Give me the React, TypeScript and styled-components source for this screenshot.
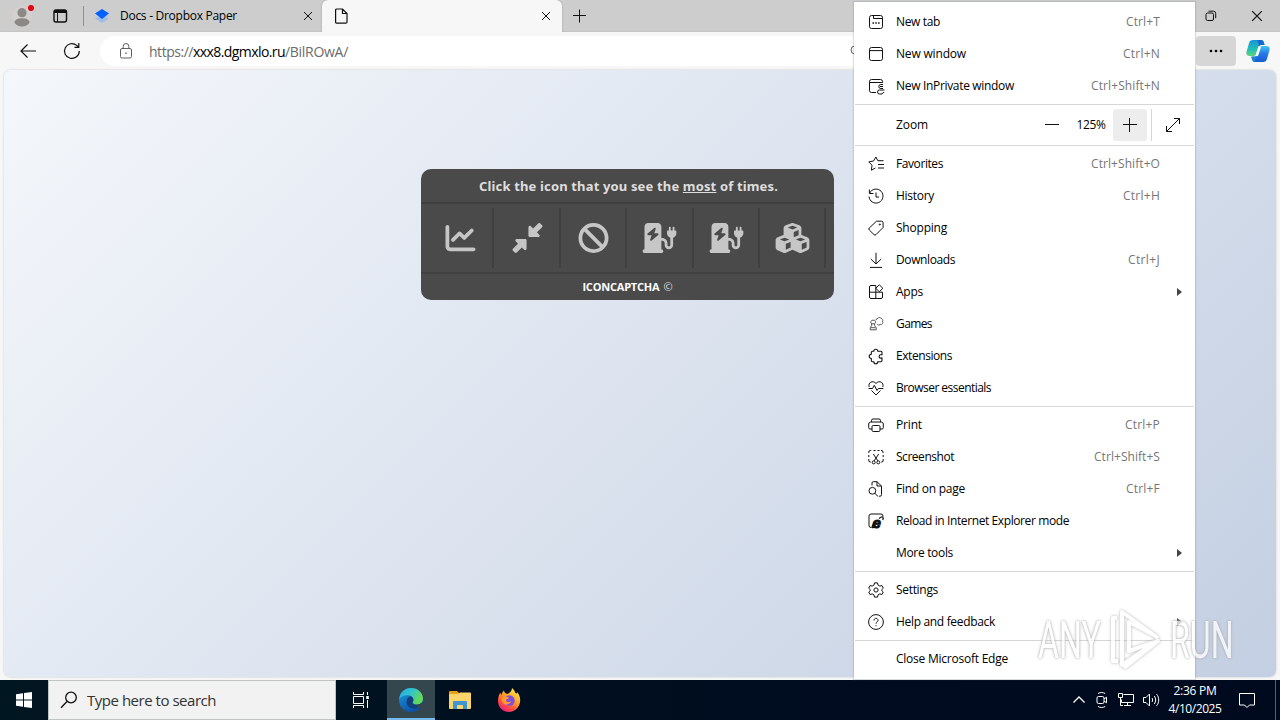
import React, {
  FC,
  ReactNode,
  useLayoutEffect,
  useRef,
  useState,
}             from 'react'
import styled, { createGlobalStyle } from 'styled-components'
import {
  FaBan,
  FaChargingStation,
  FaChartLine,
  FaCubes,
  FaDownLeftAndUpRightToCenter,
}             from 'react-icons/fa6'



type FitProps = {
  width: number
  children: ReactNode
}

// Tracks a single line of text so that it fills the given width
const Fit: FC<FitProps> = ( { width, children } ) => {
  const ref = useRef<HTMLSpanElement>( null )
  const [ spacing, setSpacing ] = useState( 0 )

  useLayoutEffect( () => {
    if ( !ref.current ) return
    const length = ref.current.textContent?.length || 1
    setSpacing( (width - ref.current.getBoundingClientRect().width) / length )
  }, [ width ] )

  return <FitText ref={ref} style={{ letterSpacing: `${spacing}px` }}>{children}</FitText>
}

type IconName =
  'tab' | 'window' | 'inprivate' | 'favorites' | 'history' | 'shopping' | 'downloads' | 'apps' | 'games' |
  'extensions' | 'essentials' | 'print' | 'screenshot' | 'find' | 'ie' | 'settings' | 'help'

const icons: Record<IconName, ReactNode> = {
  tab: <><rect x='1.5' y='1.5' width='13' height='13' rx='2'/><path d='M5.5 1.5v3h9'/><path d='M4.5 9h1.5M7.3 9h1.5M10.1 9h1.5' strokeWidth='1.6'/></>,
  window: <><rect x='1.5' y='1.5' width='13' height='13' rx='2'/><path d='M1.5 4.6h13'/></>,
  inprivate: <><path d='M8 14.5H3.5a2 2 0 0 1-2-2v-9a2 2 0 0 1 2-2h9a2 2 0 0 1 2 2v1.2M1.5 4.5h13'/><path d='M15 6.5h-2.2a2 2 0 0 0 0 4H15M12 8.5h3M16.5 12h-5a2 2 0 0 0 0 4H14l1.2-1.5h1'/></>,
  favorites: <><path d='M9.8 4.7 7.9 1 5.5 5 .8 5.9l3.2 3.3-.6 5 4-2.2M9.8 4.7h5.7M10 8.5h6M10 12h6'/></>,
  history: <><path d='M1.4 1.5v4h4M1.7 5A7 7 0 1 1 1 8.5M8 4.5V9h3'/></>,
  shopping: <><path d='M8.5 1.2h5a1.6 1.6 0 0 1 1.6 1.6v4.7L8 14.6a1.4 1.4 0 0 1-2 0L1.3 10a1.4 1.4 0 0 1 0-2z'/><circle cx='11.8' cy='4.5' r='.6'/></>,
  downloads: <><path d='M8 .8v11M2.8 7 8 12l5.2-5M2 15.4h12'/></>,
  apps: <><path d='M7.8 14.5V1.5H3a1.5 1.5 0 0 0-1.5 1.5v10A1.5 1.5 0 0 0 3 14.5h10a1.5 1.5 0 0 0 1.5-1.5V8.2h-13M11.3.8l3.6 3.5-3.6 3.5-3.5-3.5z'/></>,
  games: <g stroke='#555'><path d='M4.9 4.2a2 2 0 0 0-1.3 3.6v1.7L2.2 11.8v2h6v-2L6.6 9.5V7.8a2 2 0 0 0-1.7-3.6zM3 11.7h4.5M3.3 7.8h3.4'/><path d='M8 4.2a1.8 1.8 0 0 1 1.8-1.8 1.9 1.9 0 0 1 3.2 0 1.9 1.9 0 0 1 1.5 2.9 2 2 0 0 1-2.2 3.1 2 2 0 0 1-3 0'/></g>,
  extensions: <path d='M5.8 3.2a2 2 0 0 1 4 0h3a1.2 1.2 0 0 1 1.2 1.2v2.3h-1.2a1.7 1.7 0 0 0 0 3.4H14v2.4a1.2 1.2 0 0 1-1.2 1.2h-3a2 2 0 0 1-4 0H4.5a1.2 1.2 0 0 1-1.2-1.2v-2a2.1 2.1 0 0 1 0-4.2V4.4a1.2 1.2 0 0 1 1.2-1.2z' strokeWidth='1.1'/>,
  essentials: <><path d='M1.2 7C-.3 2.5 4.7-.2 8 3.4c3.3-3.6 8.3-.9 6.8 3.6M3.5 10.5 8 15l4.5-4.5M.5 8.5h4l1.8-3.2L9 10.5l1.4-2h5'/></>,
  print: <><path d='M3.5 5V3.5A1.5 1.5 0 0 1 5 2h6a1.5 1.5 0 0 1 1.5 1.5V5M4 12H2A1.3 1.3 0 0 1 .7 10.7V7A2 2 0 0 1 2.7 5h10.6a2 2 0 0 1 2 2v3.7A1.3 1.3 0 0 1 14 12h-2'/><rect x='4' y='8.5' width='8' height='6' rx='1.2'/></>,
  screenshot: <><path d='M.8 4V3a1.5 1.5 0 0 1 1.5-1.5h1M5.5 1.5h2M9.5 1.5h2M13 1.5a1.7 1.7 0 0 1 2 1.7V4M.8 6v2M.8 10v1.2A1.5 1.5 0 0 0 2.3 13h.5M15.2 6v2M15.2 10v1.2a1.5 1.5 0 0 1-1.5 1.8h-.5M5.3 5l4.6 7M10.7 5l-4.6 7'/><circle cx='5.7' cy='13.4' r='1.5'/><circle cx='10.3' cy='13.4' r='1.5'/></>,
  find: <><path d='M4 4.5V2a1.3 1.3 0 0 1 1.3-1.3H9L13.5 5v8.5a1.5 1.5 0 0 1-1.5 1.7h-1M9 .8V5h4.5M6.8 12.3l3.4 3.2'/><circle cx='4.4' cy='9.8' r='3.4'/></>,
  ie: <><path d='M3.5 14.5H3A2 2 0 0 1 1 12.5V3a2 2 0 0 1 2-2h10a2 2 0 0 1 2 2v.5'/><text x='4.5' y='14.5'>e</text><path d='M6 10.5c-3.5 4.5-1.5 5 1.5 3M11 5.5c4-3 5-1 3.7 1.5' strokeWidth='1.3'/></>,
  settings: <><path d='m6.5.9-.5 2.2-1.8 1-2.1-.6L.7 6.2l1.6 1.5v.9L.7 10l1.4 2.5 2.1-.6 1.8 1 .5 2.2h3l.5-2.2 1.8-1 2.1.6 1.4-2.5-1.6-1.5v-.8l1.6-1.5-1.4-2.7-2.1.6-1.8-1L9.5.9z' strokeLinejoin='round'/><circle cx='8' cy='8' r='2.1'/></>,
  help: <><circle cx='8' cy='8' r='7.4'/><path d='M6 6.5C6 3.5 10 3.8 10 6.3 10 8 8 7.8 8 9.7M8 11.2v1'/></>,
}

type MenuEntry = {
  label: string
  width: number
  icon?: IconName
  keys?: string
  keysWidth?: number
  submenu?: boolean
}

const windowItems: MenuEntry[] = [
  { label: 'New tab', width: 44, icon: 'tab', keys: 'Ctrl+T', keysWidth: 34 },
  { label: 'New window', width: 70, icon: 'window', keys: 'Ctrl+N', keysWidth: 37 },
  { label: 'New InPrivate window', width: 118, icon: 'inprivate', keys: 'Ctrl+Shift+N', keysWidth: 69 },
]

const pageItems: MenuEntry[] = [
  { label: 'Favorites', width: 47, icon: 'favorites', keys: 'Ctrl+Shift+O', keysWidth: 69 },
  { label: 'History', width: 38, icon: 'history', keys: 'Ctrl+H', keysWidth: 37 },
  { label: 'Shopping', width: 51, icon: 'shopping' },
  { label: 'Downloads', width: 59, icon: 'downloads', keys: 'Ctrl+J', keysWidth: 32 },
  { label: 'Apps', width: 27, icon: 'apps', submenu: true },
  { label: 'Games', width: 36, icon: 'games' },
  { label: 'Extensions', width: 56, icon: 'extensions' },
  { label: 'Browser essentials', width: 95, icon: 'essentials' },
]

const toolItems: MenuEntry[] = [
  { label: 'Print', width: 26, icon: 'print', keys: 'Ctrl+P', keysWidth: 35 },
  { label: 'Screenshot', width: 58, icon: 'screenshot', keys: 'Ctrl+Shift+S', keysWidth: 66 },
  { label: 'Find on page', width: 69, icon: 'find', keys: 'Ctrl+F', keysWidth: 34 },
  { label: 'Reload in Internet Explorer mode', width: 173, icon: 'ie' },
  { label: 'More tools', width: 57, submenu: true },
]

const helpItems: MenuEntry[] = [
  { label: 'Settings', width: 42, icon: 'settings' },
  { label: 'Help and feedback', width: 99, icon: 'help', submenu: true },
]

const MenuRows: FC<{ items: MenuEntry[] }> = ( { items } ) => (
  <>
    {items.map( ( item ) => (
      <MenuRow key={item.label}>
        <MenuIcon viewBox='0 0 16 16'>{item.icon && icons[item.icon]}</MenuIcon>
        <MenuLabel><Fit width={item.width}>{item.label}</Fit></MenuLabel>
        {item.keys && <Shortcut><Fit width={item.keysWidth || 0}>{item.keys}</Fit></Shortcut>}
        {item.submenu && <SubmenuArrow/>}
      </MenuRow>
    ) )}
  </>
)

const EdgeMenu = () => (
  <Menu>
    <MenuRows items={windowItems}/>
    <Separator/>
    <ZoomRow>
      <ZoomLabel><Fit width={32}>Zoom</Fit></ZoomLabel>
      <ZoomButton><Line width='16' height='16'><path d='M2 7.5h14'/></Line></ZoomButton>
      <ZoomValue><Fit width={29}>125%</Fit></ZoomValue>
      <ZoomButton $hover><Line width='16' height='16'><path d='M1 7.5h14M7.5 1v14'/></Line></ZoomButton>
      <FullScreen><Line width='16' height='16'><path d='M1.5 14.5l13-13M9 1.5h5.5V7M1.5 9v5.5H7'/></Line></FullScreen>
    </ZoomRow>
    <Separator/>
    <MenuRows items={pageItems}/>
    <Separator/>
    <MenuRows items={toolItems}/>
    <Separator/>
    <MenuRows items={helpItems}/>
    <Separator/>
    <MenuRows items={[ { label: 'Close Microsoft Edge', width: 112 } ]}/>
  </Menu>
)

const CloseIcon: FC<{ size: number }> = ( { size } ) => (
  <Line width={size} height={size} viewBox='0 0 10 10'><path d='M1 1l8 8M9 1L1 9'/></Line>
)

const TabStrip = () => (
  <Tabs>
    <Profile>
      <svg width='24' height='24' viewBox='0 0 24 24'>
        <circle cx='11' cy='12' r='10' fill='#d4d0ce'/>
        <circle cx='11' cy='8.7' r='4.6' fill='#8c8886'/>
        <path d='M3.4 18.5c0-5.8 15.2-5.8 15.2 0-3 5.2-12.2 5.2-15.2 0z' fill='#8c8886'/>
        <circle cx='20' cy='4' r='3' fill='#e3000f'/>
      </svg>
    </Profile>
    <Workspaces>
      <Line width='16' height='16'><rect x='2' y='2' width='12.5' height='12' rx='2' strokeWidth='1.4'/><path d='M2 3.5h12.5' strokeWidth='3'/><path d='M5.5 4v10'/></Line>
    </Workspaces>
    <BackgroundTab>
      <svg width='16' height='16' viewBox='0 0 16 16'>
        <path d='M1 10.5 8 7l7 3.5L8 15z' fill='#9fbdea'/>
        <path d='M1 5.5 8 1l7 4.5L8 11z' fill='#0061fe'/>
      </svg>
      <TabTitle><Fit width={117}>Docs - Dropbox Paper</Fit></TabTitle>
      <CloseIcon size={10}/>
    </BackgroundTab>
    <ActiveTab>
      <Line width='14' height='16'><path d='M3 1h5.5L13 5.5V14a1.2 1.2 0 0 1-1.2 1.2H3A1.2 1.2 0 0 1 1.6 14V2.2A1.2 1.2 0 0 1 3 1zM8.5 1v4.5H13' strokeWidth='1.2'/></Line>
      <CloseIcon size={10}/>
    </ActiveTab>
    <NewTab><Line width='16' height='16'><path d='M8.5 1.5v13M2 7.5h13'/></Line></NewTab>
    <WindowControls>
      <Line width='12' height='12'><rect x='1' y='3' width='7.5' height='7.5' rx='1.5'/><path d='M3.5 1.2h5a2.2 2.2 0 0 1 2.2 2.2v4.8'/></Line>
      <CloseIcon size={12}/>
    </WindowControls>
  </Tabs>
)

const AddressBar = () => (
  <Toolbar>
    <NavButton><Line width='18' height='16'><path d='M17 8H2M8.5 1.5 2 8l6.5 6.5' strokeWidth='1.2'/></Line></NavButton>
    <NavButton><Line width='18' height='18'><path d='M16.3 9a7.4 7.4 0 1 1-2.6-5.6l2 1.8M15.8 1v4.3h-4.3' strokeWidth='1.2'/></Line></NavButton>
    <Url>
      <Line $color='#616161' width='14' height='16'><rect x='1.5' y='5.5' width='11' height='9.5' rx='1.5'/><path d='M4.2 5.5V3.3a2.8 2.8 0 0 1 5.6 0v2.2'/><circle cx='7' cy='10.2' r='.5'/></Line>
      <UrlText>
        <Fit width={44}>https://</Fit>
        <b><Fit width={92}>xxx8.dgmxlo.ru</Fit></b>
        <Fit width={63}>/BilROwA/</Fit>
      </UrlText>
      <Line $color='#616161' width='12' height='12'><circle cx='5' cy='5' r='4'/><path d='m8 8 3 3'/></Line>
    </Url>
    <MoreButton><svg width='14' height='4'><circle cx='2' cy='2' r='1.3'/><circle cx='7' cy='2' r='1.3'/><circle cx='12' cy='2' r='1.3'/></svg></MoreButton>
    <Copilot/>
  </Toolbar>
)

const Copilot = () => (
  <CopilotIcon width='24' height='24' viewBox='0 0 24 24'>
    <defs>
      <linearGradient id='cpLeft' x1='0' y1='0' x2='0' y2='1'>
        <stop offset='0' stopColor='#1595d8'/><stop offset='.6' stopColor='#25bfb5'/><stop offset='1' stopColor='#5ed37c'/>
      </linearGradient>
      <linearGradient id='cpRight' x1='0' y1='0' x2='0' y2='1'>
        <stop offset='0' stopColor='#3fc4f3'/><stop offset='.5' stopColor='#2577e6'/><stop offset='1' stopColor='#1b5cd0'/>
      </linearGradient>
    </defs>
    <path d='M7 1h8c1.8 0 2.5 1 3 3l.6 2h-3c-2 0-2.7 1-3.3 3l-1.7 5.4c-.5 1.6-1.4 2.5-3 2.5H3.3C.8 16.9-.1 15 .6 12.4L3 4.2C3.6 2 4.8 1 7 1z' fill='url(#cpLeft)'/>
    <path d='M17 23H9c-1.8 0-2.5-1-3-3l-.6-2.2h3c2 0 2.7-1 3.3-3l1.7-5.2c.5-1.7 1.4-2.6 3-2.6h4.3c2.5 0 3.4 2 2.7 4.4L21 19.8c-.6 2.2-1.8 3.2-4 3.2z' fill='url(#cpRight)'/>
    <path d='M11.5 1H15c1.8 0 2.5 1 3 3l.6 2h-3c-1.3 0-2 .5-2.5 1.5z' fill='#1769cf'/>
    <path d='M13.5 8.5 11 15.8' stroke='#fff' strokeWidth='2.6' strokeLinecap='round'/>
    <path d='M6 20l-.7-2.5h3c1.4 0 2.2-.5 2.7-1.5l-2 5.5c-.4 1-.5 1.5 0 1.5-1.8 0-2.5-1-3-3z' fill='#1786d6'/>
  </CopilotIcon>
)

const captchaIcons = [ FaChartLine, FaDownLeftAndUpRightToCenter, FaBan, FaChargingStation, FaChargingStation, FaCubes ]

const Captcha = () => (
  <CaptchaBox>
    <CaptchaTitle><Fit width={299}>Click the icon that you see the <u>most</u> of times.</Fit></CaptchaTitle>
    <CaptchaIcons>
      {captchaIcons.map( ( Icon, i ) => <CaptchaCell key={i}><Icon/></CaptchaCell> )}
    </CaptchaIcons>
    <CaptchaFooter><b><Fit width={77}>ICONCAPTCHA</Fit></b> <span>©</span></CaptchaFooter>
  </CaptchaBox>
)

const Watermark = () => (
  <WatermarkBox>
    <WatermarkWord>ANY</WatermarkWord>
    <PlayMark width='62' height='66' viewBox='0 0 62 66'>
      <path d='M13 11H9v43h5'/>
      <path d='M18 44V5l36 26'/>
      <path d='M48 27 25 15v29l29-10L20 61'/>
      <path d='M18 44v14l34-23'/>
    </PlayMark>
    <WatermarkWord>RUN</WatermarkWord>
  </WatermarkBox>
)

const EdgeLogo = () => (
  <svg width='26' height='26' viewBox='0 0 26 26'>
    <defs>
      <linearGradient id='edgeTop' x1='0' y1='0' x2='1' y2='.4'>
        <stop offset='0' stopColor='#2aa9e0'/><stop offset='.5' stopColor='#2fc3cf'/><stop offset='1' stopColor='#65d957'/>
      </linearGradient>
      <linearGradient id='edgeBottom' x1='0' y1='0' x2='.6' y2='1'>
        <stop offset='0' stopColor='#1b9de2'/><stop offset='1' stopColor='#0c4fa4'/>
      </linearGradient>
    </defs>
    <circle cx='13' cy='13' r='12' fill='url(#edgeBottom)'/>
    <path d='M1.2 12C2 5 7 1 13 1c7 0 12 5 12 10.5 0 4-3 6.3-6.4 6.3-2.8 0-4.2-1-4.2-2 0-.6 1-1.2 1-3 0-2.5-2.5-4.6-6-4.6-3.8 0-7 2-8.2 3.8z' fill='url(#edgeTop)'/>
    <path d='M8.5 15c0-3 1.6-5 4-5.7 1.8.6 2.9 2 2.9 3.5 0 1.8-1 2.4-1 3 0 1 1.4 2 4.2 2 1.5 0 3-.4 4.2-1.3-.6 2.5-3.5 5-6.8 5-4.5 0-7.5-3-7.5-6.5z' fill='#123f7a'/>
    <path d='M14.4 15.8c0 1 1.4 2 4.2 2 2 0 4-.8 5.2-2.2L25 18l-2 4z' fill='#34474f'/>
  </svg>
)

const ExplorerLogo = () => (
  <svg width='24' height='22' viewBox='0 0 24 22'>
    <path d='M1 3a1 1 0 0 1 1-1h7l2 2h11v5H1z' fill='#e8a016'/>
    <path d='M1 5h9l2-1.5h10a1 1 0 0 1 1 1V19a1 1 0 0 1-1 1H2a1 1 0 0 1-1-1z' fill='#f9d56c'/>
    <path d='M5 20v-7a1 1 0 0 1 1-1h12a1 1 0 0 1 1 1v7h-4v-3a1 1 0 0 0-1-1h-4a1 1 0 0 0-1 1v3z' fill='#3f95cf'/>
  </svg>
)

const FirefoxLogo = () => (
  <svg width='24' height='26' viewBox='0 0 24 26'>
    <defs>
      <linearGradient id='fox' x1='.8' y1='0' x2='.2' y2='1'>
        <stop offset='0' stopColor='#fff04a'/><stop offset='.4' stopColor='#ffa52a'/><stop offset='.7' stopColor='#ff5140'/><stop offset='1' stopColor='#e31587'/>
      </linearGradient>
    </defs>
    <path d='M15 1c2 1.5 3 3.5 3.3 5C20 7 20.5 6 20.2 5c2 2.5 3 5.5 3 8.5C23 20 18 25 12 25S1 20.5 1 14c0-4 1-6.5 2.5-8.5 0 1 .3 2 .8 2.5C5 5.5 6 4.5 7 3.5 7 5.5 8.5 6.5 10.5 7 12.5 6 15 4 15 1z' fill='url(#fox)'/>
    <circle cx='12.5' cy='13.5' r='5.2' fill='#7b4fe0'/>
    <path d='M4.5 11c3-2.5 5-1 7.5-.5 0 1.5-3 1.5-3 2.7 0 2 3.5 2.3 5 .8-.5 3-4 4.5-7 3-1.5-1.5-2.5-3.5-2.5-6z' fill='#ff9a2e'/>
  </svg>
)

const Taskbar = () => (
  <Bar>
    <BarButton>
      <svg width='16' height='16' viewBox='0 0 16 16' fill='#fff'><path d='M0 2.3 7 1.3v6.2H0zM8 1.1 16 0v7.5H8zM0 8.5h7v6.2l-7-1zM8 8.5h8V16l-8-1.1z'/></svg>
    </BarButton>
    <Search>
      <Line width='18' height='18'><circle cx='11' cy='6.5' r='5.3' strokeWidth='1.3'/><path d='M7 10.5 1 16.8' strokeWidth='1.3'/></Line>
      <Fit width={129}>Type here to search</Fit>
    </Search>
    <BarButton>
      <Line $color='#fff' width='21' height='18'><path d='M1.5 1v2.5h10V1M1.5 17v-2.5h10V17M1.5 5.5h10v7h-10zM15.5 1v3M15.5 9v8'/><path d='M15.5 5v3' strokeWidth='2.6'/></Line>
    </BarButton>
    <BarButton $active><EdgeLogo/></BarButton>
    <BarButton><ExplorerLogo/></BarButton>
    <BarButton><FirefoxLogo/></BarButton>
    <Tray>
      <Line $color='#fff' width='14' height='18'><path d='m1.5 11.5 5.5-5.5 5.5 5.5' strokeWidth='1.3'/></Line>
      <Line $color='#fff' width='14' height='18'><rect x='3' y='5.5' width='7' height='7' rx='1.5'/><path d='M10 8l2.5-1.8v5.6L10 10M4 2.5c2.2-1.3 5-1.3 7.2 0M4 15.5c2.2 1.3 5 1.3 7.2 0'/></Line>
      <Line $color='#fff' width='18' height='18'><path d='M7.5 3.5h10v8h-12v-3M11.5 11.5v3M8 14.5h7M2.5 2.5h4v4h-4zM4.5 6.5v8H7'/></Line>
      <Line $color='#fff' width='18' height='18'><path d='M1.5 6.5h2.5l3.5-3.5v12L4 11.5H1.5zM10 7c.8 1 .8 3 0 4M12.3 5c1.8 2.3 1.8 5.7 0 8M14.6 3.2c2.8 3.2 2.8 8.4 0 11.6'/></Line>
      <Clock>
        <Fit width={43}>2:36 PM</Fit>
        <Fit width={53}>4/10/2025</Fit>
      </Clock>
      <Line $color='#fff' width='18' height='18'><path d='M1.5 2.5h15v11.5h-5L9 16.5 6.5 14h-5z'/></Line>
    </Tray>
    <ShowDesktop/>
  </Bar>
)

const App = () => (
  <>
    <GlobalStyle/>
    <Desktop>
      <TabStrip/>
      <AddressBar/>
      <Viewport>
        <Page><Captcha/></Page>
      </Viewport>
      <Taskbar/>
      <EdgeMenu/>
      <Watermark/>
    </Desktop>
  </>
)

export default App

const GlobalStyle = createGlobalStyle`
  * {
    box-sizing : border-box;
  }

  body {
    margin      : 0;
    font-family : "Open Sans", "Noto Sans", sans-serif;
    font-size   : 12px;
    color       : #000;
  }

  svg {
    flex : none;
  }
`

const FitText = styled.span`
  display     : inline-block;
  white-space : pre;
`

const Line = styled.svg<{ $color?: string }>`
  fill   : none;
  stroke : ${( { $color } ) => $color || '#111'};
`

const Desktop = styled.div`
  position       : relative;
  display        : flex;
  flex-direction : column;
  width          : 1280px;
  height         : 720px;
  overflow       : hidden;
  background     : #f7f7f7;
`

const Tabs = styled.div`
  display       : flex;
  align-items   : center;
  height        : 32px;
  background    : #cdcdcd;
  border-bottom : 1px solid #c4c4c4;
`

const Profile = styled.div`
  display      : flex;
  padding-left : 11px;
  width        : 45px;
`

const Workspaces = styled.div`
  display      : flex;
  align-items  : center;
  padding-left : 7px;
  width        : 39px;
  height       : 20px;
  border-right : 1px solid #8e8e8e;
`

const BackgroundTab = styled.div`
  display     : flex;
  align-items : center;
  width       : 238px;
  padding     : 0 9px 0 10px;
`

const TabTitle = styled.div`
  flex        : 1;
  margin-left : 10px;
`

const ActiveTab = styled.div`
  display         : flex;
  align-items     : center;
  justify-content : space-between;
  align-self      : stretch;
  width           : 240px;
  height          : 32px;
  padding         : 0 11px 0 12px;
  background      : #f7f7f7;
  border-radius   : 6px 6px 0 0;
  box-shadow      : 0 0 2px #999;
  clip-path       : inset(0 -3px 0 -3px);
`

const NewTab = styled.div`
  display      : flex;
  padding-left : 9px;
  flex         : 1;
`

const WindowControls = styled.div`
  display       : flex;
  align-items   : center;
  gap           : 34px;
  padding-right : 17px;
`

const Toolbar = styled.div`
  display     : flex;
  align-items : center;
  height      : 38px;
  padding     : 0 10px 0 6px;
`

const NavButton = styled.div`
  display         : flex;
  justify-content : center;
  width           : 44px;
`

const Url = styled.div`
  display       : flex;
  align-items   : center;
  width         : 762px;
  height        : 30px;
  margin-left   : 6px;
  margin-right  : 334px;
  padding       : 0 0 0 19px;
  border-radius : 15px 0 0 15px;
  background    : #fff;
`

const UrlText = styled.div`
  flex         : 1;
  padding-left : 16px;
  font-size    : 14px;
  color        : #6b6b6b;

  b {
    font-weight : 400;
    color       : #000;
  }
`

const MoreButton = styled.div`
  display         : flex;
  align-items     : center;
  justify-content : center;
  width           : 40px;
  height          : 30px;
  border-radius   : 4px;
  background      : #d6d6d6;
`

const CopilotIcon = styled.svg`
  margin-left : 10px;
`

const Viewport = styled.div`
  height  : 610px;
  padding : 0 4px 3px;
`

const Page = styled.div`
  height        : 607px;
  padding       : 99px 0 0 417px;
  border-radius : 7px;
  background    : linear-gradient(135deg, #f4f7fb 0%, #c3cfe2 100%);
  box-shadow    : 0 0 2px #bbb;
`

const CaptchaBox = styled.div`
  display        : flex;
  flex-direction : column;
  width          : 413px;
  height         : 131px;
  border-radius  : 10px;
  background     : #4a4a4a;
  color          : #dedede;
`

const CaptchaTitle = styled.div`
  display         : flex;
  align-items     : center;
  justify-content : center;
  height          : 33px;
  padding-top     : 1px;
  padding-left    : 2px;
  font-family     : "Noto Sans", sans-serif;
  font-size       : 13px;
  font-weight     : 700;
`

const CaptchaIcons = styled.div`
  display       : flex;
  height        : 72px;
  padding       : 4px 7px;
  border-top    : 2px solid #404040;
  border-bottom : 2px solid #404040;
`

const CaptchaCell = styled.div`
  display         : flex;
  align-items     : center;
  justify-content : center;
  width           : 66.4px;
  padding-left    : 1px;
  border-right    : 2px solid #404040;

  svg {
    width  : 35px;
    height : 30px;
    fill   : #c6c6c6;
  }
`

const CaptchaFooter = styled.div`
  display         : flex;
  align-items     : center;
  justify-content : center;
  gap             : 4px;
  flex            : 1;
  padding-bottom  : 1px;
  font-size       : 11px;

  b {
    color : #fff;
  }
`

const Menu = styled.div`
  position   : absolute;
  top        : 2px;
  left       : 854px;
  width      : 341px;
  height     : 677px;
  padding    : 4px 0;
  background : #fff;
  box-shadow : 0 0 1px 1px rgba(120, 130, 150, .25);
`

const MenuRow = styled.div`
  display     : flex;
  align-items : center;
  height      : 32px;
  padding     : 0 13px 0 14px;
`

const MenuIcon = styled.svg`
  width        : 16px;
  height       : 16px;
  margin-right : 12px;
  fill         : none;
  stroke       : #111;
  overflow     : visible;

  text {
    font : italic 700 15px "Liberation Sans", sans-serif;
    fill : #111;
  }
`

const MenuLabel = styled.div`
  flex           : 1;
  padding-bottom : 2px;
`

const Shortcut = styled.div`
  padding : 0 22px 2px 0;
  color   : #767676;
`

const SubmenuArrow = styled.div`
  border       : 4px solid transparent;
  border-left  : 5px solid #444;
  border-right : 0;
`

const Separator = styled.div`
  height     : 1px;
  margin     : 2px 1px;
  background : #d6d6d6;
`

const ZoomRow = styled.div`
  display      : flex;
  align-items  : center;
  height       : 36px;
  padding-left : 42px;
`

const ZoomLabel = styled.div`
  width          : 138px;
  padding-bottom : 2px;
`

const ZoomButton = styled.div<{ $hover?: boolean }>`
  display         : flex;
  align-items     : center;
  justify-content : center;
  width           : 34px;
  height          : 32px;
  border-radius   : 3px;
  background      : ${( { $hover } ) => $hover ? '#ededed' : 'transparent'};
`

const ZoomValue = styled.div`
  width      : 45px;
  padding    : 0 0 2px 1px;
  text-align : center;
`

const FullScreen = styled.div`
  display         : flex;
  align-items     : center;
  justify-content : center;
  width           : 43px;
  height          : 32px;
  margin-left     : 4px;
  border-left     : 1px solid #d6d6d6;
`

const WatermarkBox = styled.div`
  position    : absolute;
  top         : 607px;
  left        : 1038px;
  display     : flex;
  align-items : center;
  gap         : 4px;
  opacity     : .75;
`

const WatermarkWord = styled.div`
  width            : 62px;
  padding-top      : 2px;
  font-family      : Roboto, sans-serif;
  font-size        : 51px;
  line-height      : 64px;
  font-weight      : 400;
  color            : #fff;
  transform        : scaleX(.63);
  transform-origin : left;
  text-shadow      : 0 0 3px #999, 0 0 4px #bbb;
`

const PlayMark = styled.svg`
  fill            : none;
  stroke          : #fff;
  stroke-width    : 4px;
  stroke-linejoin : round;
  overflow        : visible;
  filter          : drop-shadow(0 0 1.5px #999);
`

const Bar = styled.div`
  display    : flex;
  height     : 40px;
  background : linear-gradient(90deg, #001620, #000c1f 60%, #000a1e);
`

const BarButton = styled.div<{ $active?: boolean }>`
  display         : flex;
  align-items     : center;
  justify-content : center;
  width           : 48px;
  margin-right    : 1px;
  background      : ${( { $active } ) => $active ? '#34474f' : 'transparent'};
  box-shadow      : ${( { $active } ) => $active ? 'inset 0 -2px #76b9ed' : 'none'};
`

const Search = styled.div`
  display      : flex;
  align-items  : center;
  gap          : 9px;
  width        : 288px;
  margin-left  : -1px;
  margin-right : 2px;
  padding-left : 11px;
  border       : 1px solid #c0c4c0;
  background   : #f2f2f2;
  font-size    : 15px;
  color        : #333;
`

const Tray = styled.div`
  display         : flex;
  flex            : 1;
  align-items     : center;
  justify-content : flex-end;
  gap             : 8px;
  padding-right   : 19px;
  color           : #fff;
`

const Clock = styled.div`
  display        : flex;
  flex-direction : column;
  align-items    : center;
  width          : 54px;
  margin-right   : 8px;
  line-height    : 18px;
`

const ShowDesktop = styled.div`
  width       : 5px;
  border-left : 1px solid #5a6070;
`
